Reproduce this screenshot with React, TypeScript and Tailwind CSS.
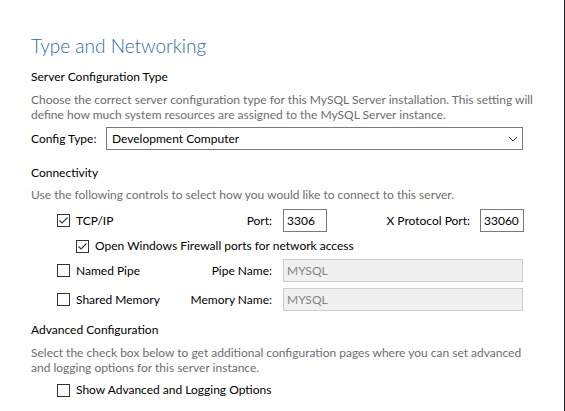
import React from 'react'

function Check({ checked }: { checked?: boolean }) {
  return (
    <div className="w-[13px] h-[13px] border border-[#333333] bg-white flex items-center justify-center shrink-0">
      {checked && (
        <svg width="11" height="11" viewBox="0 0 11 11">
          <polyline points="1.5,5.5 4,8 9.5,2.5" fill="none" stroke="#333333" strokeWidth="1.1" />
        </svg>
      )}
    </div>
  )
}

function TextBox({ value, disabled, className }: { value: string; disabled?: boolean; className?: string }) {
  return (
    <div
      className={
        'h-[23px] border flex items-start pt-[2px] pl-[3px] ' +
        (disabled ? 'bg-[#f0f0f0] border-[#cccccc] text-[#838383] ' : 'bg-white border-[#7a7a7a] text-black ') +
        (className ?? '')
      }
    >
      {value}
    </div>
  )
}

export default function App() {
  return (
    <main className="w-[565px] h-[411px] bg-white border-r border-[#1e1e2a] overflow-hidden font-['Lato','Liberation_Sans',sans-serif] text-[12px] text-black whitespace-nowrap">
      <div className="pl-[31px] pt-[33px] flex flex-col">
        <h1 className="h-[26px] leading-[26px] text-[19px] font-light text-[#2b6ea8]">Type and Networking</h1>

        <h2 className="mt-[10px] h-[16px] leading-[16px]">Server Configuration Type</h2>
        <p className="mt-[7px] leading-[15px] text-[#6d6d6d]">
          Choose the correct server configuration type for this MySQL Server installation. This setting will
          <br />
          define how much system resources are assigned to the MySQL Server instance.
        </p>

        <div className="mt-[5px] h-[23px] flex items-center">
          <span className="w-[75px]">Config Type:</span>
          <div className="h-[23px] w-[417px] border border-[#7a7a7a] flex items-center justify-between pl-[5px] pr-[4px]">
            <span>Development Computer</span>
            <svg width="10" height="6" viewBox="0 0 10 6">
              <polyline points="1,1 5,5 9,1" fill="none" stroke="#333333" strokeWidth="1" />
            </svg>
          </div>
        </div>

        <h2 className="mt-[15px] h-[16px] leading-[16px]">Connectivity</h2>
        <p className="mt-[6px] h-[16px] leading-[16px] text-[#6d6d6d]">
          Use the following controls to select how you would like to connect to this server.
        </p>

        <div className="mt-[6px] h-[23px] flex items-center">
          <div className="w-[241px] pl-[26px] flex items-center justify-between">
            <div className="flex items-center gap-[6px]">
              <Check checked />
              <span>TCP/IP</span>
            </div>
            <span>Port:</span>
          </div>
          <TextBox value="3306" className="ml-[11px] w-[44px]" />
          <span className="w-[143px] text-right">X Protocol Port:</span>
          <TextBox value="33060" className="ml-[10px] w-[44px]" />
        </div>

        <div className="mt-[6px] h-[16px] pl-[45px] flex items-center gap-[6px]">
          <Check checked />
          <span>Open Windows Firewall ports for network access</span>
        </div>

        <div className="mt-[5px] h-[23px] flex items-center">
          <div className="w-[241px] pl-[26px] flex items-center justify-between">
            <div className="flex items-center gap-[6px]">
              <Check />
              <span>Named Pipe</span>
            </div>
            <span>Pipe Name:</span>
          </div>
          <TextBox value="MYSQL" disabled className="ml-[11px] w-[240px]" />
        </div>

        <div className="mt-[6px] h-[23px] flex items-center">
          <div className="w-[241px] pl-[26px] flex items-center justify-between">
            <div className="flex items-center gap-[6px]">
              <Check />
              <span>Shared Memory</span>
            </div>
            <span>Memory Name:</span>
          </div>
          <TextBox value="MYSQL" disabled className="ml-[11px] w-[240px]" />
        </div>

        <h2 className="mt-[11px] h-[16px] leading-[16px]">Advanced Configuration</h2>
        <p className="mt-[7px] leading-[15px] text-[#6d6d6d]">
          Select the check box below to get additional configuration pages where you can set advanced
          <br />
          and logging options for this server instance.
        </p>

        <div className="mt-[7px] h-[16px] pl-[26px] flex items-center gap-[6px]">
          <Check />
          <span>Show Advanced and Logging Options</span>
        </div>
      </div>
    </main>
  )
}
